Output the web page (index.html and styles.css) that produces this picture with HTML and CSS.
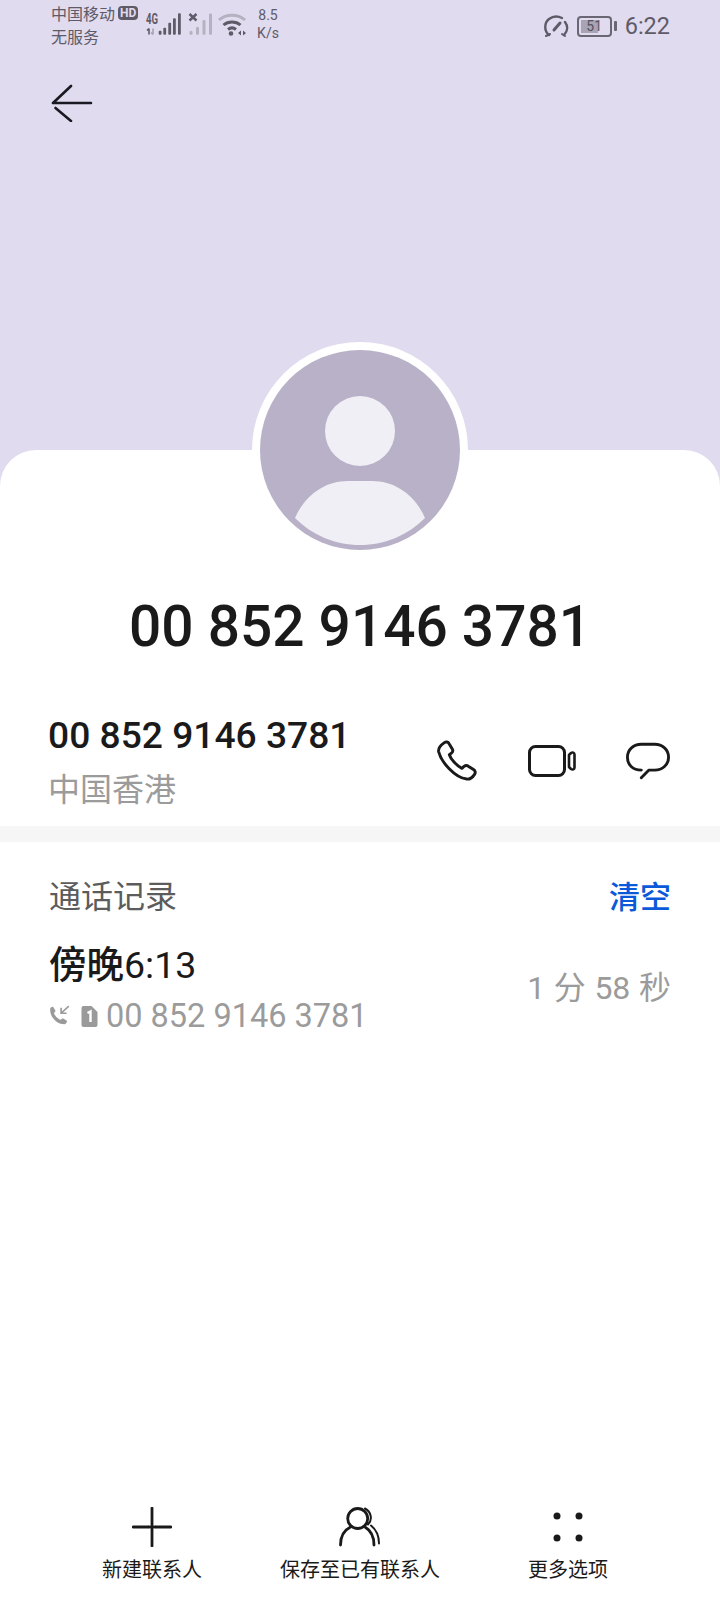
FILE: index.html
```html
<!DOCTYPE html>
<html lang="zh-CN">
<head>
    <meta charset="UTF-8">
    <meta name="viewport" content="width=device-width, initial-scale=1.0">
    <title>通话详情</title>
    <link rel="stylesheet" href="styles.css">
</head>
<body>
    <div class="page">
        <header class="top">
            <div class="statusbar">
                <div class="carrier">
                    <div class="carrier-line">中国移动<span class="hd">HD</span></div>
                    <div class="carrier-line">无服务</div>
                </div>
                <svg class="signal" width="68" height="26" viewBox="0 0 68 26">
                    <text x="0" y="13" class="sig-label" textLength="12" lengthAdjust="spacingAndGlyphs">4G</text>
                    <path d="M3 23.500V17.500M1 19.500l2-2" stroke="#5f5a68" stroke-width="1.600" fill="none"/>
                    <path d="M7 17.500v6M5 21.500l2 2" stroke="#a8a3b2" stroke-width="1.600" fill="none"/>
                    <g fill="#5f5a68">
                        <rect x="12.700" y="19.700" width="2.800" height="4" rx="1"/>
                        <rect x="17.300" y="16.700" width="2.800" height="7" rx="1"/>
                        <rect x="22.300" y="11.700" width="2.800" height="12" rx="1"/>
                        <rect x="27" y="7.300" width="2.800" height="16.400" rx="1"/>
                        <rect x="32" y="2.300" width="2.800" height="21.400" rx="1"/>
                    </g>
                    <path d="M43.500 3l7 6.500M50.500 3l-7 6.500" stroke="#5f5a68" stroke-width="2.400"/>
                    <g fill="#b6b1c0">
                        <rect x="43.500" y="20" width="3" height="3.700" rx="1"/>
                        <rect x="50" y="16" width="3" height="7.700" rx="1"/>
                        <rect x="56.500" y="9" width="3" height="14.700" rx="1"/>
                        <rect x="63" y="2.500" width="3" height="21.200" rx="1"/>
                    </g>
                </svg>
                <svg class="wifi" width="30" height="24" viewBox="0 0 30 24">
                    <path d="M1 8c7-6.500 19-6.500 26 0" stroke="#b6b1c0" stroke-width="3" fill="none"/>
                    <path d="M5.500 13c4.500-4 12.500-4 17 0M10 17.500c2.500-2 5.500-2 8 0" stroke="#5f5a68" stroke-width="3" fill="none"/>
                    <circle cx="13" cy="21.500" r="2.300" fill="#5f5a68"/>
                    <path d="M23 18.500v5l-3-2.500zM25 18.500v5l3-2.500z" fill="#5f5a68"/>
                </svg>
                <div class="speed"><div>8.5</div><div>K/s</div></div>
                <div class="status-right">
                    <svg width="26" height="24" viewBox="0 0 26 24">
                        <path d="M6 21C1 17 1 9 6 5c4-3 9-3 13-1M22 8c3 4 3 9-1 13" stroke="#5f5a68" stroke-width="2.400" fill="none" stroke-linecap="round"/>
                        <path d="M11 16l6-7" stroke="#5f5a68" stroke-width="3" stroke-linecap="round"/>
                        <path d="M3 22l4-2M19 20l3 2" stroke="#5f5a68" stroke-width="2" stroke-linecap="round"/>
                    </svg>
                    <div class="battery">
                        <div class="battery-body"><div class="battery-fill"></div><span class="battery-num">51</span></div>
                        <div class="battery-tip"></div>
                    </div>
                    <span class="clock">6:22</span>
                </div>
            </div>
            <svg class="back" width="42" height="38" viewBox="0 0 42 38">
                <path d="M40 19H2M20 2L2 19M4.500 24L20 37" stroke="#1a1a22" stroke-width="2.600" fill="none" stroke-linecap="round"/>
            </svg>
        </header>

        <main class="sheet">
            <div class="avatar-ring">
                <svg class="avatar" width="200" height="200" viewBox="0 0 200 200">
                    <circle cx="100" cy="100" r="100" fill="#b9b1c7"/>
                    <circle cx="100" cy="81" r="35" fill="#f0eff5"/>
                    <path d="M35 168C45 145 65 131 88 131h24c23 0 43 14 53 37-17 17-40 27-65 27s-48-10-65-27z" fill="#f0eff5"/>
                </svg>
            </div>

            <h1 class="title">00 852 9146 3781</h1>

            <section class="number-row">
                <div>
                    <div class="number">00 852 9146 3781</div>
                    <div class="region">中国香港</div>
                </div>
                <div class="actions">
                    <svg width="42" height="42" viewBox="0 0 40 40">
                        <path d="M8 2.500c1.500-1 3.500-.8 4.500 1l3 5c.8 1.500.5 3-.8 4l-2 1.500c1.500 4.500 7 10.500 12 13l2-1.800c1.200-1 2.800-1.200 4-.3l5 3.200c1.600 1 2.200 3 1 4.600-1.800 2.800-4.500 5-7.500 4.500C18 36 5 21 2.500 11 2 7.500 5 4.500 8 2.500z" stroke="#1a1a1a" stroke-width="2.800" fill="none" stroke-linejoin="round"/>
                    </svg>
                    <svg width="48" height="32" viewBox="0 0 48 32">
                        <rect x="1.500" y="1.500" width="35" height="29" rx="6" stroke="#1a1a1a" stroke-width="3" fill="none"/>
                        <path d="M41 10l2-2c1.500-1 3.500-.5 3.500 1.500v13c0 2-2 2.500-3.500 1.500L41 22z" stroke="#1a1a1a" stroke-width="2.600" fill="none" stroke-linejoin="round"/>
                    </svg>
                    <svg width="44" height="38" viewBox="0 0 46 38">
                        <path d="M16 28.500C7 28.500 1.500 23 1.500 15S8 1.500 16 1.500h14c8 0 14.500 5.500 14.500 13.500S38 28.500 30 28.500h-6L16 36.500" stroke="#1a1a1a" stroke-width="3" fill="none" stroke-linecap="round" stroke-linejoin="round"/>
                    </svg>
                </div>
            </section>

            <div class="divider"></div>

            <section class="log">
                <div class="log-head">
                    <span class="log-title">通话记录</span>
                    <span class="log-clear">清空</span>
                </div>
                <div class="log-item">
                    <div>
                        <div class="log-time"><span class="log-day">傍晚</span>6:13</div>
                        <div class="log-detail">
                            <svg width="22" height="22" viewBox="1 1 20 20">
                                <path d="M2 5c0-1.500 2-3 3-2l2 3.500-1.500 2c1 2.500 3.500 5 6 6l2-1.500 3.500 2c1 1-.5 3.500-2 3.500C8 18.500 2 12 2 5z" fill="#9a9a9a"/>
                                <path d="M19 2l-7 6.500M12 3.500V8.500h5" stroke="#9a9a9a" stroke-width="1.500" fill="none"/>
                            </svg>
                            <svg class="sim" width="17" height="21" viewBox="0 0 16 21">
                                <path d="M2 0h8l6 6v13a2 2 0 0 1-2 2H2a2 2 0 0 1-2-2V2a2 2 0 0 1 2-2z" fill="#9a9a9a"/>
                                <path d="M6 7l3-1.500V16" stroke="#fff" stroke-width="2.400" fill="none"/>
                            </svg>
                            <span class="log-number">00 852 9146 3781</span>
                        </div>
                    </div>
                    <div class="log-duration">1 分 58 秒</div>
                </div>
            </section>
        </main>

        <nav class="toolbar">
            <div class="tool">
                <svg width="40" height="40" viewBox="0 0 40 40">
                    <path d="M20 1v38M1 20h15M24 20h15" stroke="#1a1a1a" stroke-width="2.800" stroke-linecap="round"/>
                    <path d="M16 20h8" stroke="#1a1a1a" stroke-width="2.800"/>
                </svg>
                <span>新建联系人</span>
            </div>
            <div class="tool">
                <svg width="42" height="40" viewBox="0 0 42 40">
                    <circle cx="18.700" cy="11.500" r="10" stroke="#1a1a1a" stroke-width="2.800" fill="none"/>
                    <path d="M1.500 38c0-9 4-15 10-18M26 20c5 3 9 9 9 18" stroke="#1a1a1a" stroke-width="2.800" fill="none" stroke-linecap="round"/>
                    <path d="M26 1.500c6 3 8 11 3 16M32 18.500c5 4 8 10 8 18" stroke="#1a1a1a" stroke-width="2" fill="none" stroke-linecap="round"/>
                </svg>
                <span>保存至已有联系人</span>
            </div>
            <div class="tool">
                <svg width="40" height="40" viewBox="0 0 40 40">
                    <circle cx="9" cy="9" r="3.500" fill="#1a1a1a"/>
                    <circle cx="31" cy="9" r="3.500" fill="#1a1a1a"/>
                    <circle cx="9" cy="31" r="3.500" fill="#1a1a1a"/>
                    <circle cx="31" cy="31" r="3.500" fill="#1a1a1a"/>
                </svg>
                <span>更多选项</span>
            </div>
        </nav>
    </div>
</body>
</html>
```

FILE: styles.css
```css
* {
    box-sizing: border-box;
}

html,
body {
    margin: 0;
    padding: 0;
}

body {
    font-family: 'Roboto', 'Noto Sans CJK SC', sans-serif;
    background-color: #e0dbee;
    color: #1a1a1a;
}

.page {
    width: 720px;
    height: 1600px;
    display: flex;
    flex-direction: column;
    overflow: hidden;
}

.top {
    height: 450px;
    padding: 0 50px 0 51px;
    flex-shrink: 0;
}

.statusbar {
    height: 50px;
    display: flex;
    align-items: flex-start;
    color: #5f5a68;
}

.carrier {
    width: 95px;
    padding-top: 1px;
    font-size: 16px;
    white-space: nowrap;
}

.carrier-line {
    display: flex;
    align-items: center;
    height: 23px;
}

.hd {
    margin-left: 3px;
    padding: 0 2px;
    background-color: #5f5a68;
    color: #e0dbee;
    border-radius: 4px;
    font-size: 12px;
    font-weight: 700;
    line-height: 14px;
}

.signal {
    margin-top: 11px;
    flex-shrink: 0;
}

.sig-label {
    font-size: 14px;
    font-weight: 700;
    fill: #5f5a68;
}

.wifi {
    margin: 12px 0 0 4px;
}

.speed {
    margin: 6px 0 0 5px;
    width: 30px;
    font-size: 14px;
    line-height: 18px;
    text-align: center;
}

.status-right {
    margin-left: auto;
    padding-top: 12px;
    display: flex;
    align-items: center;
    gap: 8px;
}

.battery {
    display: flex;
    align-items: center;
    gap: 2px;
}

.battery-body {
    position: relative;
    width: 35px;
    height: 21px;
    border: 2px solid #6b6674;
    border-radius: 4px;
    padding: 2px;
}

.battery-fill {
    width: 17px;
    height: 13px;
    background-color: #a9a4b3;
}

.battery-num {
    position: absolute;
    left: 0;
    right: 0;
    top: 0;
    text-align: center;
    font-size: 14px;
    line-height: 17px;
    color: #55505e;
}

.battery-tip {
    width: 3px;
    height: 10px;
    background-color: #6b6674;
    border-radius: 1px;
}

.clock {
    font-size: 23.5px;
}

.back {
    display: block;
    margin-top: 34px;
}

.sheet {
    flex: 1;
    background-color: #fff;
    border-radius: 36px 36px 0 0;
    position: relative;
    display: flex;
    flex-direction: column;
}

.avatar-ring {
    position: absolute;
    left: 252px;
    top: -108px;
    width: 216px;
    height: 216px;
    border-radius: 50%;
    padding: 8px;
    background-color: #fff;
}

.avatar {
    display: block;
}

.title {
    margin: 137px 0 0 0;
    text-align: center;
    font-size: 56.8px;
    font-weight: 500;
    line-height: 80px;
}

.number-row {
    margin-top: 44px;
    padding: 0 50px 0 48px;
    height: 115px;
    display: flex;
    justify-content: space-between;
}

.number {
    font-size: 37.2px;
    font-weight: 500;
    line-height: 48px;
}

.region {
    margin-top: 10px;
    font-size: 32px;
    line-height: 42px;
    color: #9b9b9b;
}

.actions {
    display: flex;
    align-items: center;
    gap: 50px;
    height: 100px;
}

.divider {
    height: 16px;
    background-color: #f6f6f6;
}

.log {
    padding: 0 49px;
}

.log-head {
    margin-top: 28px;
    display: flex;
    justify-content: space-between;
    align-items: center;
    height: 48px;
}

.log-title {
    font-size: 32px;
    color: #5c5c5c;
}

.log-clear {
    font-size: 31px;
    font-weight: 500;
    color: #0a59d8;
}

.log-item {
    margin-top: 22px;
    display: flex;
    justify-content: space-between;
    align-items: center;
}

.log-time {
    font-size: 37.5px;
    line-height: 50px;
}

.log-day {
    font-weight: 500;
}

.log-detail {
    margin-top: 2px;
    display: flex;
    align-items: center;
    gap: 8px;
    height: 48px;
}

.sim {
    margin-left: 2px;
}

.log-number {
    font-size: 32.5px;
    color: #9b9b9b;
}

.log-duration {
    margin-bottom: 10px;
    font-size: 32px;
    word-spacing: .7px;
    color: #9b9b9b;
}

.toolbar {
    height: 132px;
    flex-shrink: 0;
    background-color: #fff;
    display: grid;
    grid-template-columns: repeat(3, 208px);
    padding: 39px 48px 0 48px;
}

.tool {
    display: flex;
    flex-direction: column;
    align-items: center;
    gap: 8px;
    font-size: 20px;
    line-height: 30px;
}
```
